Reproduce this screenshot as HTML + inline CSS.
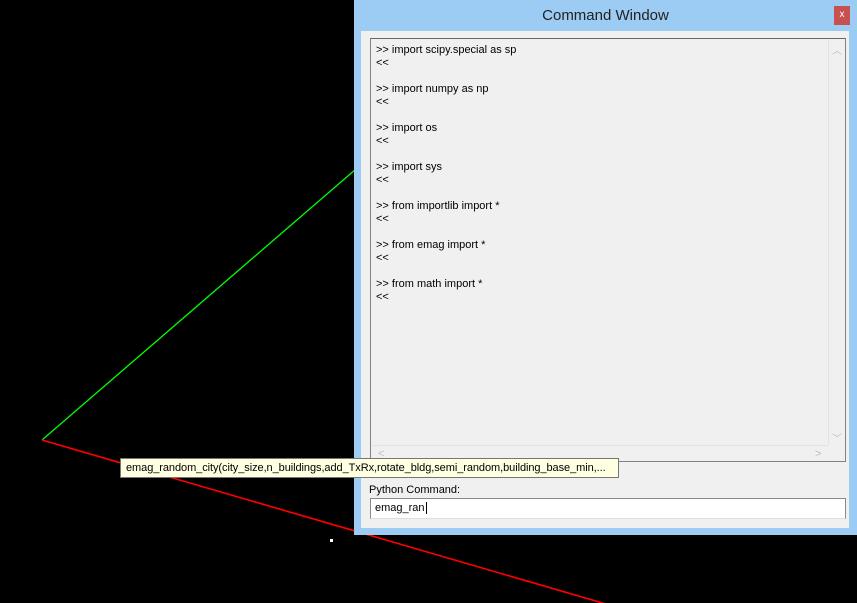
<!DOCTYPE html><html><head><style>
body{margin:0;width:857px;height:603px;background:#000;position:relative;overflow:hidden;font-family:"Liberation Sans",sans-serif;font-size:11px;}
.a{position:absolute}
</style></head><body>
<svg class="a" style="left:0;top:0" width="857" height="603"><line x1="42" y1="440" x2="356" y2="169" stroke="#00ff00" stroke-width="1.3"/><line x1="42" y1="440" x2="606" y2="604" stroke="#ff0000" stroke-width="1.6"/><rect x="330" y="539" width="3" height="3" fill="#fff"/></svg>
<div class="a" style="left:354px;top:0;width:503px;height:535px;background:#9ccbf3;"></div>
<div class="a" style="left:354px;top:0;width:503px;height:31px;text-align:center;line-height:31px;font-size:15px;color:#222;">Command Window</div>
<div class="a" style="left:834px;top:6px;width:16px;height:19px;background:#c75050;color:#fff;font-size:10px;text-align:center;line-height:18px">x</div>
<div class="a" style="left:361px;top:31px;width:488px;height:497px;background:#f0f0f0;"></div>
<div class="a" style="left:370px;top:38px;width:474px;height:422px;border:1px solid #828282;border-top-color:#666;background:#f0f0f0;"></div>
<div class="a" style="left:828px;top:40px;width:16px;height:405px;border-left:1px solid #e3e3e3;color:#bbb;font-size:10px;text-align:center">
<div style="position:absolute;top:2px;width:16px">︿</div><div style="position:absolute;top:390px;width:16px">﹀</div></div>
<div class="a" style="left:372px;top:445px;width:456px;height:16px;border-top:1px solid #e3e3e3;color:#bbb;font-size:11px;"><span style="position:absolute;left:6px;top:2px">&lt;</span><span style="position:absolute;left:443px;top:2px">&gt;</span></div>
<div class="a" style="left:376px;top:44px;line-height:13px;color:#000;white-space:pre">&gt;&gt; import scipy.special as sp
&lt;&lt;

&gt;&gt; import numpy as np
&lt;&lt;

&gt;&gt; import os
&lt;&lt;

&gt;&gt; import sys
&lt;&lt;

&gt;&gt; from importlib import *
&lt;&lt;

&gt;&gt; from emag import *
&lt;&lt;

&gt;&gt; from math import *
&lt;&lt;</div>
<div class="a" style="left:369px;top:484px;color:#000">Python Command:</div>
<div class="a" style="left:370px;top:498px;width:474px;height:19px;background:#fff;border:1px solid #8a8a8a;border-bottom-color:#ddd;"><span style="position:absolute;left:4px;top:3px">emag_ran<span style="border-left:1px solid #000;margin-left:1px"></span></span></div>
<div class="a" style="left:120px;top:458px;width:497px;height:18px;background:#ffffe1;border:1px solid #767676;line-height:18px;"><span style="padding-left:5px;letter-spacing:-0.07px">emag_random_city(city_size,n_buildings,add_TxRx,rotate_bldg,semi_random,building_base_min,...</span></div>
</body></html>
